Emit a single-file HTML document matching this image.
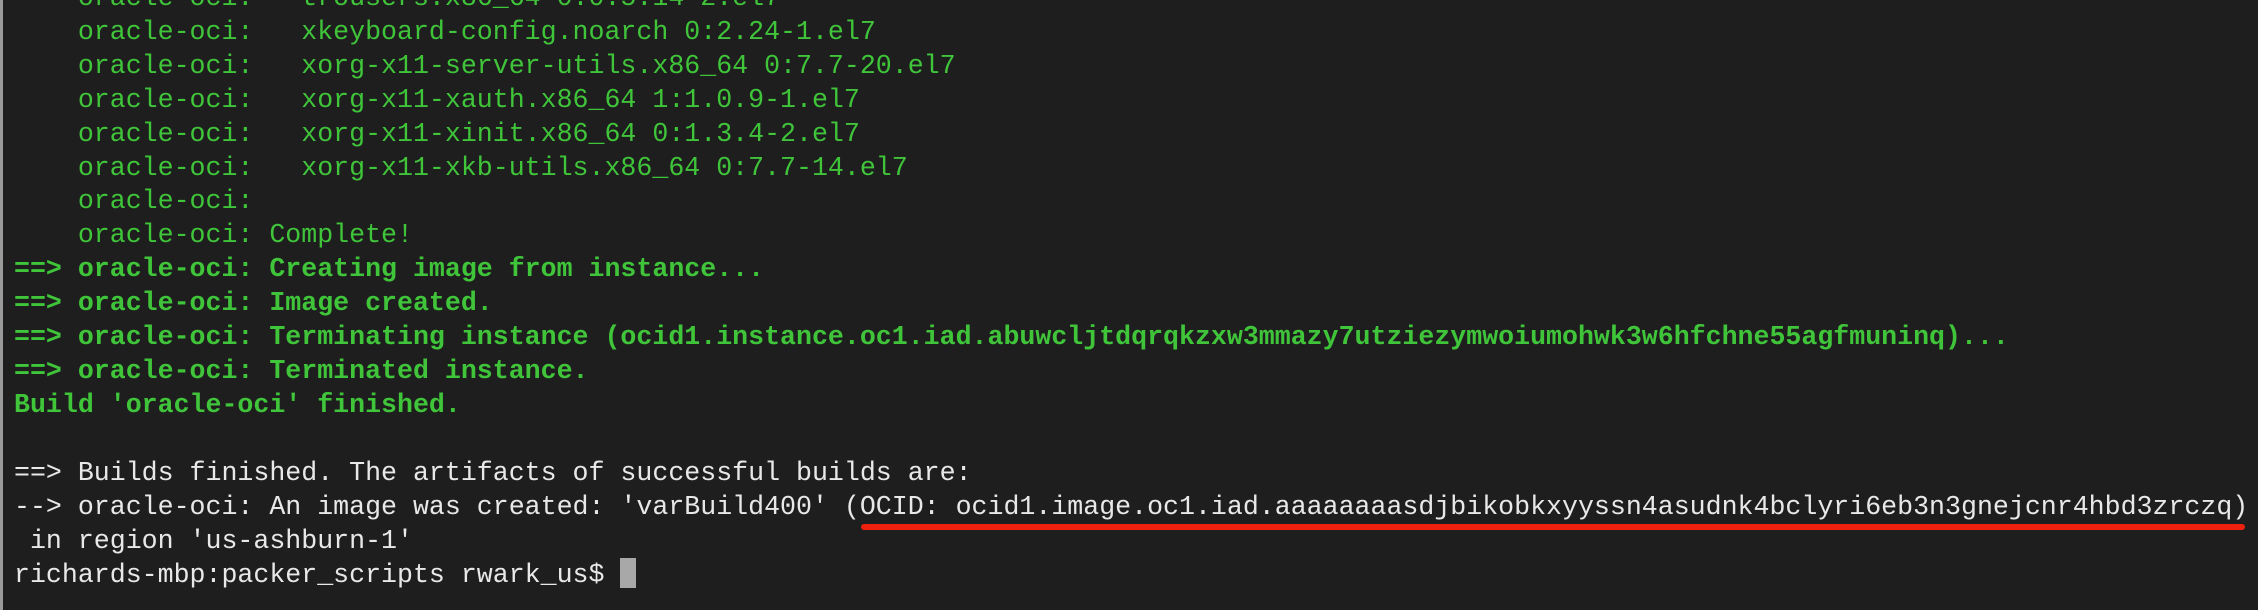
<!DOCTYPE html>
<html><head><meta charset="utf-8"><style>
html,body{margin:0;padding:0;}
body{width:2258px;height:610px;background:#1e1e1e;overflow:hidden;position:relative;}
.b{position:absolute;left:0;top:0;width:3px;height:610px;background:#9a9a9a;}
pre{position:absolute;left:14px;top:-18px;margin:0;font-family:"Liberation Mono",monospace;font-size:26.6px;line-height:33.9px;color:#e8e8e8;white-space:pre;}
.g{color:#3fc43a;}
.gb{color:#3fc43a;font-weight:bold;}
.cur{display:inline-block;width:16px;height:30px;background:#a8a8a8;vertical-align:-6px;}
.red{position:absolute;left:861px;top:524px;width:1384px;height:6px;background:#f0200e;border-radius:3px;}
</style></head><body>
<div class="b"></div>
<pre><span class="g">    oracle-oci:   trousers.x86_64 0:0.5.14-2.el7</span>
<span class="g">    oracle-oci:   xkeyboard-config.noarch 0:2.24-1.el7</span>
<span class="g">    oracle-oci:   xorg-x11-server-utils.x86_64 0:7.7-20.el7</span>
<span class="g">    oracle-oci:   xorg-x11-xauth.x86_64 1:1.0.9-1.el7</span>
<span class="g">    oracle-oci:   xorg-x11-xinit.x86_64 0:1.3.4-2.el7</span>
<span class="g">    oracle-oci:   xorg-x11-xkb-utils.x86_64 0:7.7-14.el7</span>
<span class="g">    oracle-oci:</span>
<span class="g">    oracle-oci: Complete!</span>
<span class="gb">==&gt; oracle-oci: Creating image from instance...</span>
<span class="gb">==&gt; oracle-oci: Image created.</span>
<span class="gb">==&gt; oracle-oci: Terminating instance (ocid1.instance.oc1.iad.abuwcljtdqrqkzxw3mmazy7utziezymwoiumohwk3w6hfchne55agfmuninq)...</span>
<span class="gb">==&gt; oracle-oci: Terminated instance.</span>
<span class="gb">Build 'oracle-oci' finished.</span>

==&gt; Builds finished. The artifacts of successful builds are:
--&gt; oracle-oci: An image was created: 'varBuild400' (OCID: ocid1.image.oc1.iad.aaaaaaaasdjbikobkxyyssn4asudnk4bclyri6eb3n3gnejcnr4hbd3zrczq)
 in region 'us-ashburn-1'
richards-mbp:packer_scripts rwark_us$ <span class="cur"></span></pre>
<div class="red"></div>
</body></html>
